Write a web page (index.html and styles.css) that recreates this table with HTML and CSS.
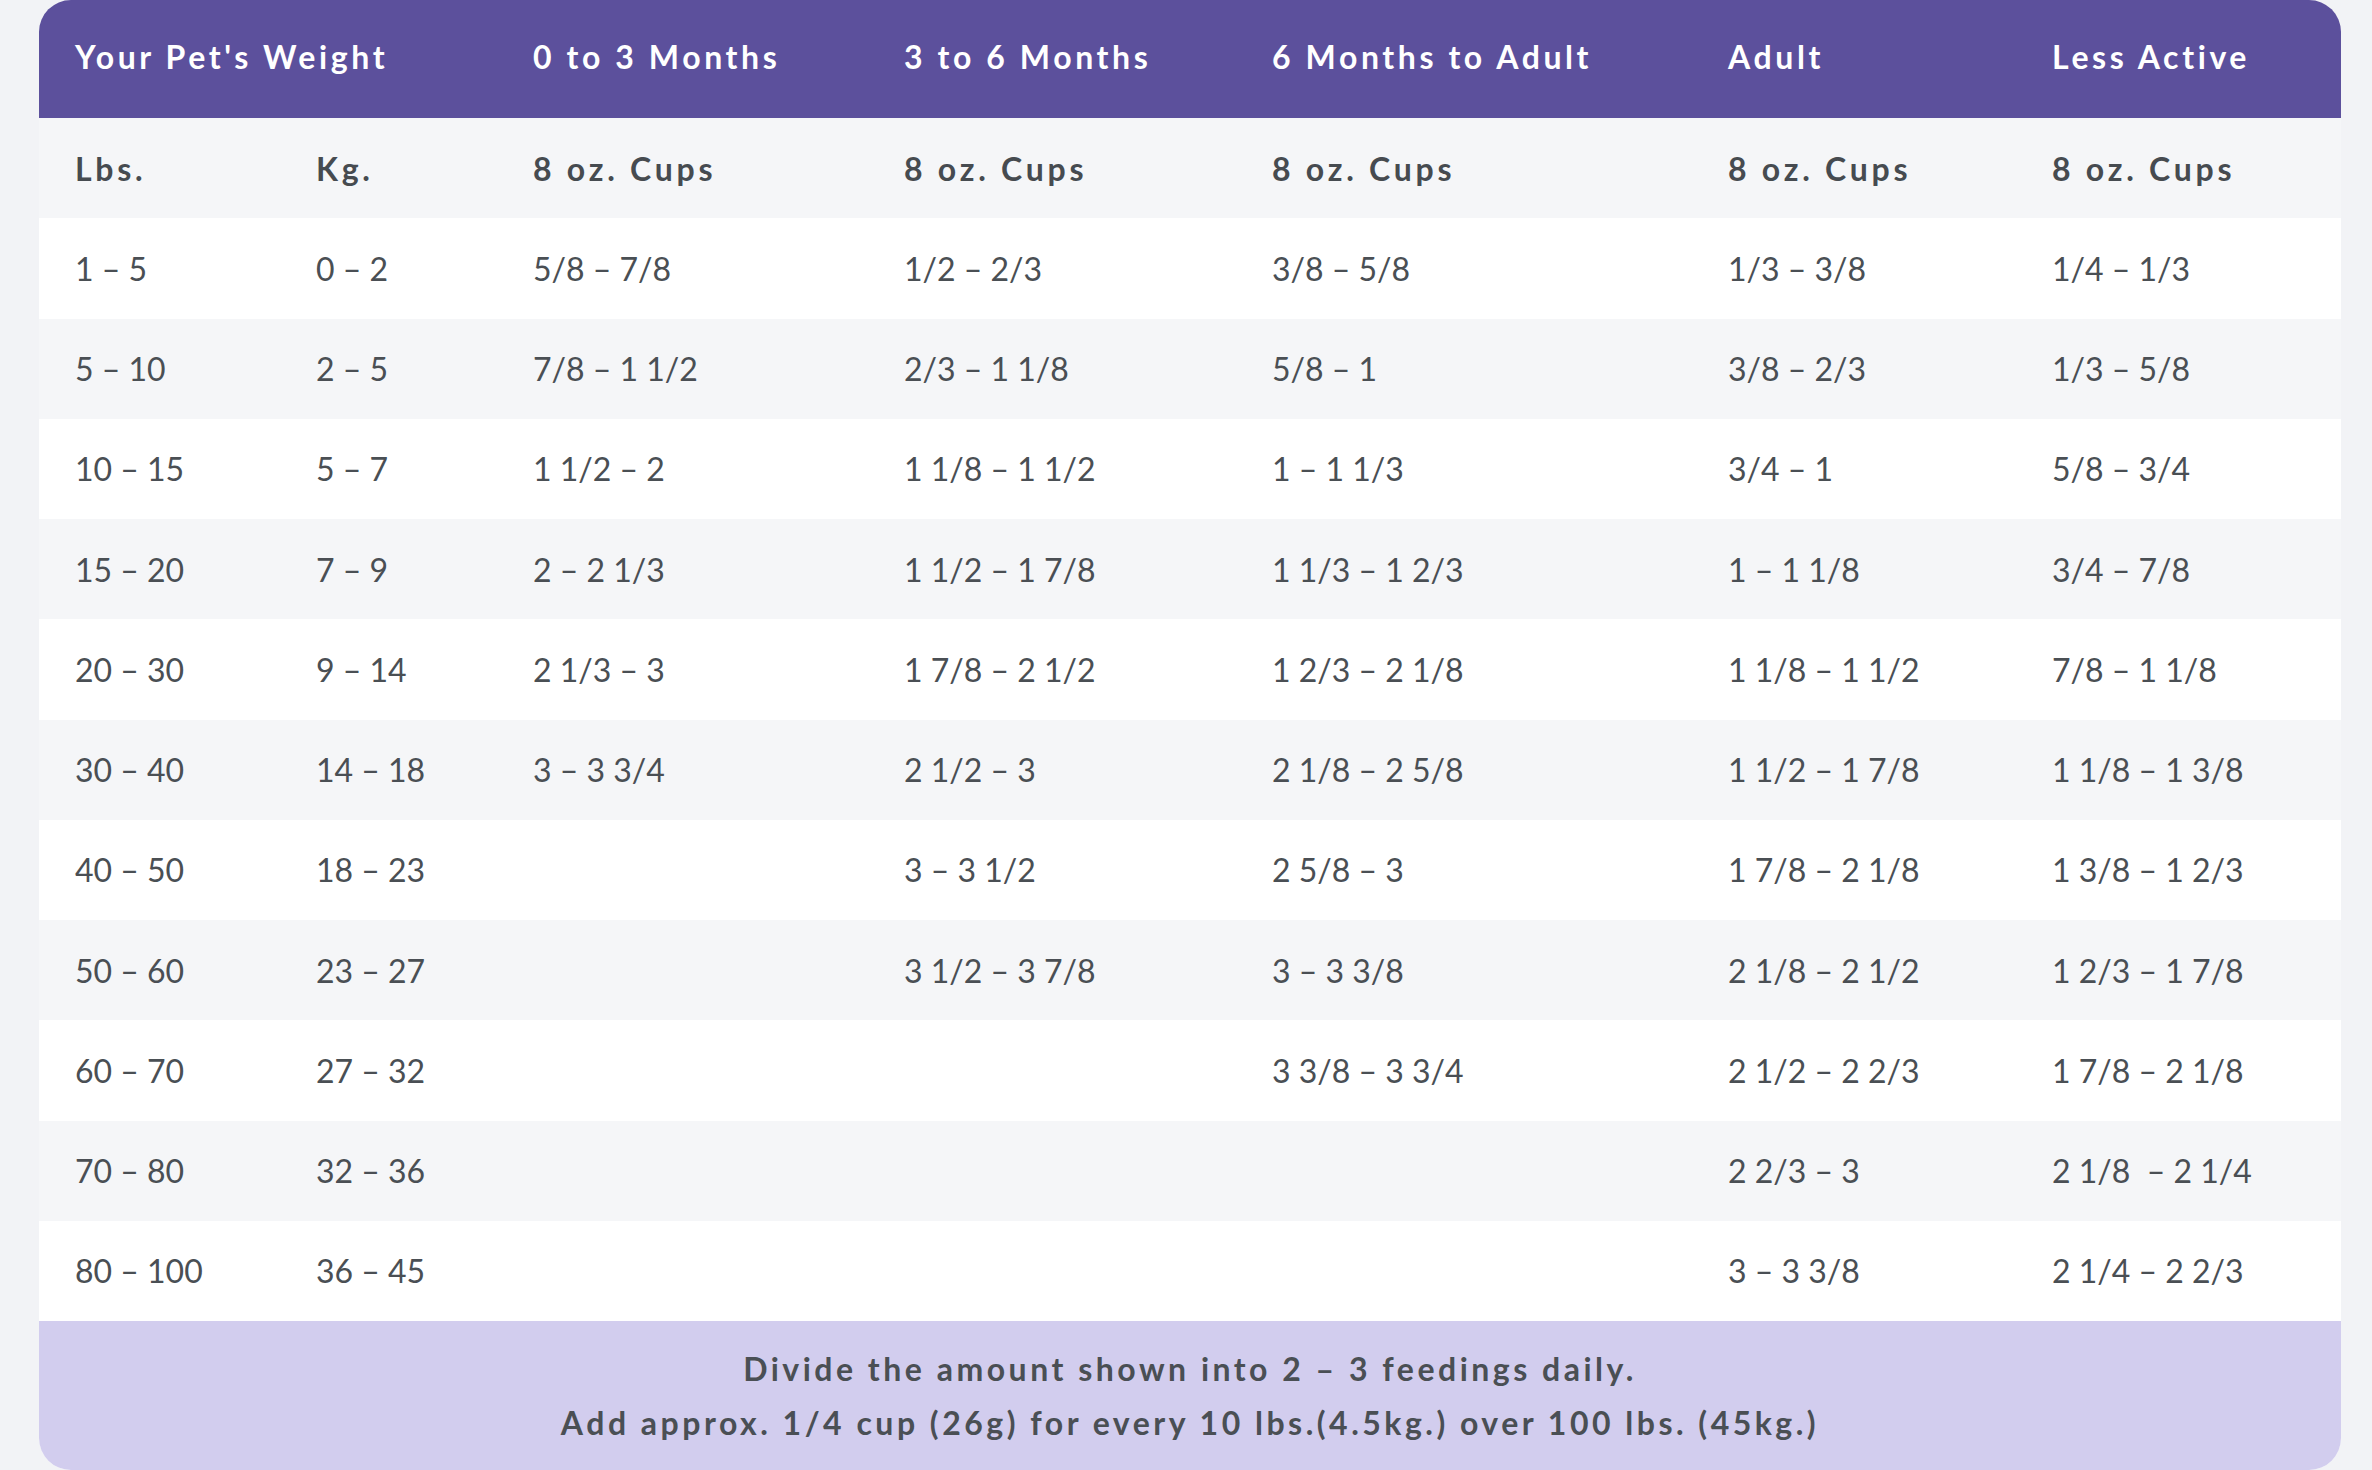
FILE: index.html
```html
<!DOCTYPE html>
<html lang="en">
<head>
<meta charset="utf-8">
<title>Feeding Chart</title>
<link rel="stylesheet" href="styles.css">
</head>
<body>
<div class="card">
  <table class="chart">
    <colgroup>
      <col class="c1"><col class="c2"><col class="c3"><col class="c4"><col class="c5"><col class="c6"><col class="c7">
    </colgroup>
    <thead>
      <tr class="head">
        <th colspan="2">Your Pet's Weight</th>
        <th>0 to 3 Months</th>
        <th>3 to 6 Months</th>
        <th>6 Months to Adult</th>
        <th>Adult</th>
        <th>Less Active</th>
      </tr>
    </thead>
    <tbody>
      <tr class="sub">
        <td>Lbs.</td><td>Kg.</td><td>8 oz. Cups</td><td>8 oz. Cups</td><td>8 oz. Cups</td><td>8 oz. Cups</td><td>8 oz. Cups</td>
      </tr>
      <tr><td>1 – 5</td><td>0 – 2</td><td>5/8 – 7/8</td><td>1/2 – 2/3</td><td>3/8 – 5/8</td><td>1/3 – 3/8</td><td>1/4 – 1/3</td></tr>
      <tr><td>5 – 10</td><td>2 – 5</td><td>7/8 – 1 1/2</td><td>2/3 – 1 1/8</td><td>5/8 – 1</td><td>3/8 – 2/3</td><td>1/3 – 5/8</td></tr>
      <tr><td>10 – 15</td><td>5 – 7</td><td>1 1/2 – 2</td><td>1 1/8 – 1 1/2</td><td>1 – 1 1/3</td><td>3/4 – 1</td><td>5/8 – 3/4</td></tr>
      <tr><td>15 – 20</td><td>7 – 9</td><td>2 – 2 1/3</td><td>1 1/2 – 1 7/8</td><td>1 1/3 – 1 2/3</td><td>1 – 1 1/8</td><td>3/4 – 7/8</td></tr>
      <tr><td>20 – 30</td><td>9 – 14</td><td>2 1/3 – 3</td><td>1 7/8 – 2 1/2</td><td>1 2/3 – 2 1/8</td><td>1 1/8 – 1 1/2</td><td>7/8 – 1 1/8</td></tr>
      <tr><td>30 – 40</td><td>14 – 18</td><td>3 – 3 3/4</td><td>2 1/2 – 3</td><td>2 1/8 – 2 5/8</td><td>1 1/2 – 1 7/8</td><td>1 1/8 – 1 3/8</td></tr>
      <tr><td>40 – 50</td><td>18 – 23</td><td></td><td>3 – 3 1/2</td><td>2 5/8 – 3</td><td>1 7/8 – 2 1/8</td><td>1 3/8 – 1 2/3</td></tr>
      <tr><td>50 – 60</td><td>23 – 27</td><td></td><td>3 1/2 – 3 7/8</td><td>3 – 3 3/8</td><td>2 1/8 – 2 1/2</td><td>1 2/3 – 1 7/8</td></tr>
      <tr><td>60 – 70</td><td>27 – 32</td><td></td><td></td><td>3 3/8 – 3 3/4</td><td>2 1/2 – 2 2/3</td><td>1 7/8 – 2 1/8</td></tr>
      <tr><td>70 – 80</td><td>32 – 36</td><td></td><td></td><td></td><td>2 2/3 – 3</td><td>2 1/8 &nbsp;– 2 1/4</td></tr>
      <tr><td>80 – 100</td><td>36 – 45</td><td></td><td></td><td></td><td>3 – 3 3/8</td><td>2 1/4 – 2 2/3</td></tr>
    </tbody>
  </table>
  <div class="note">
    <p>Divide the amount shown into 2 – 3 feedings daily.</p>
    <p>Add approx. 1/4 cup (26g) for every 10 lbs.(4.5kg.) over 100 lbs. (45kg.)</p>
  </div>
</div>
</body>
</html>
```

FILE: styles.css
```css
html, body {
  margin: 0;
  padding: 0;
  background: #f2f3f6;
}

body {
  font-family: "Lato", "Liberation Sans", sans-serif;
  color: #464b50;
}

.card {
  margin: 0 31px 0 39px;
  height: 1470px;
  border-radius: 32px;
  overflow: hidden;
  background: #ffffff;
  display: flex;
  flex-direction: column;
}

.chart {
  width: 100%;
  border-collapse: collapse;
  table-layout: fixed;
}

.c1 { width: 241px; }
.c2 { width: 217px; }
.c3 { width: 371px; }
.c4 { width: 368px; }
.c5 { width: 456px; }
.c6 { width: 324px; }
.c7 { width: 325px; }

.chart th,
.chart td {
  text-align: left;
  padding: 0 0 0 36px;
  font-size: 32px;
  white-space: nowrap;
}

.head {
  background: #5c509c;
  height: 118px;
}

.head th {
  color: #ffffff;
  font-weight: 700;
  letter-spacing: 3.6px;
  padding-bottom: 6px;
}

.chart tbody tr {
  height: 100.25px;
  background: #ffffff;
}

.chart tbody tr:nth-child(odd) {
  background: #f5f6f8;
}

.chart td {
  font-weight: 400;
  color: #4a4f54;
}

.sub td {
  font-weight: 700;
  color: #464b50;
  letter-spacing: 3.75px;
}

.note {
  flex: 1;
  background: #d2cdee;
  display: flex;
  flex-direction: column;
  justify-content: center;
  align-items: center;
}

.note p {
  margin: 0;
  font-size: 32px;
  line-height: 54px;
  font-weight: 700;
  color: #4a4f54;
  letter-spacing: 3.5px;
}
```
